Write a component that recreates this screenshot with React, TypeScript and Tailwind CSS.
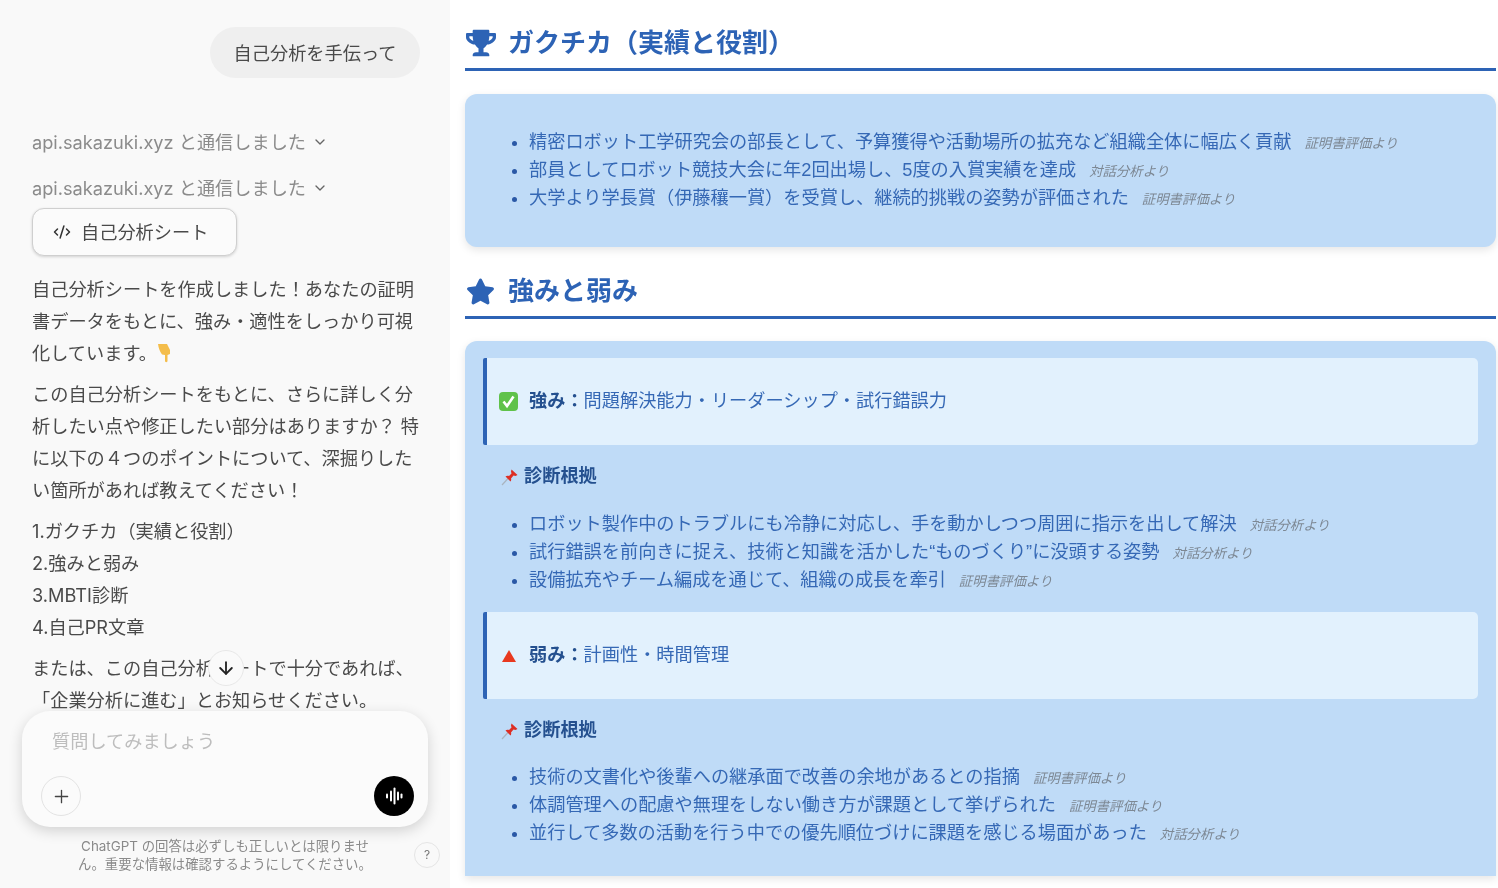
import React from 'react';
import { ArrowDown, ChevronDown, CodeXml, Plus } from 'lucide-react';
import { FaStar, FaTrophy } from 'react-icons/fa';

type Item = { text: string; source: string };

const gakuchika: Item[] = [
  { text: '精密ロボット工学研究会の部長として、予算獲得や活動場所の拡充など組織全体に幅広く貢献', source: '証明書評価より' },
  { text: '部員としてロボット競技大会に年2回出場し、5度の入賞実績を達成', source: '対話分析より' },
  { text: '大学より学長賞（伊藤穰一賞）を受賞し、継続的挑戦の姿勢が評価された', source: '証明書評価より' },
];

const strengths: Item[] = [
  { text: 'ロボット製作中のトラブルにも冷静に対応し、手を動かしつつ周囲に指示を出して解決', source: '対話分析より' },
  { text: '試行錯誤を前向きに捉え、技術と知識を活かした“ものづくり”に没頭する姿勢', source: '対話分析より' },
  { text: '設備拡充やチーム編成を通じて、組織の成長を牽引', source: '証明書評価より' },
];

const weaknesses: Item[] = [
  { text: '技術の文書化や後輩への継承面で改善の余地があるとの指摘', source: '証明書評価より' },
  { text: '体調管理への配慮や無理をしない働き方が課題として挙げられた', source: '証明書評価より' },
  { text: '並行して多数の活動を行う中での優先順位づけに課題を感じる場面があった', source: '対話分析より' },
];

const Pin = () => (
  <svg width="18" height="18" viewBox="0 0 18 18" className="shrink-0">
    <path d="M1 17 L7 10.5" stroke="#a9b4bf" strokeWidth="1.2" />
    <path d="M10.5 1.5 L16.5 7 L14.5 8 L12.5 7.5 L10 10.5 C10.5 12 10 13 9.5 13.5 L4.5 8.5 C5.5 7.5 7 7.5 8 8 L10.5 5.5 L10 3.5 Z" fill="#dd2e24" />
  </svg>
);

const CheckEmoji = () => (
  <svg width="19" height="19" viewBox="0 0 19 19" className="shrink-0">
    <rect x="0" y="0" width="19" height="19" rx="4" fill="#5fc24a" />
    <path d="M4.5 9.5 L8 14 L14.5 4.5" fill="none" stroke="#fff" strokeWidth="2.6" />
  </svg>
);

const PointDown = () => (
  <svg width="16" height="20" viewBox="0 0 16 20" className="inline-block align-[-3px]">
    <path d="M1 1 H10 C11 3 12 5 13 7 V11 L10.5 12 V18 C10.5 19.5 8 19.5 8 18 V12 L5 11.5 C3 9 1.5 5 1 1 Z" fill="#f4bd4a" />
  </svg>
);

const Wave = () => (
  <svg width="20" height="20" viewBox="0 0 20 20">
    <g stroke="#fff" strokeWidth="2" strokeLinecap="round">
      <path d="M3 8.5 V11.5" />
      <path d="M7 5.5 V14.5" />
      <path d="M10.5 2.5 V17.5" />
      <path d="M14 6.5 V13.5" />
      <path d="M17.5 8.5 V11.5" />
    </g>
  </svg>
);

const Bullets = ({ items, className }: { items: Item[]; className: string }) => (
  <ul className={`list-disc pl-[64px] marker:text-[#2a58a6] ${className}`}>
    {items.map((item) => (
      <li key={item.text} className="h-[28px] leading-[28px] whitespace-nowrap">
        {item.text}
        <span className="ml-[13px] text-[13.4px] italic text-[#7d8894]">{item.source}</span>
      </li>
    ))}
  </ul>
);

const Heading = ({ icon, title, className }: { icon: React.ReactNode; title: string; className: string }) => (
  <div className={`flex h-[52px] items-start border-b-[3px] border-[#2d63b5] text-[#2d63b5] ${className}`}>
    <div className="flex h-[48px] w-[43px] shrink-0 items-center pl-[1px]">{icon}</div>
    <h2 className="text-[26px] font-bold leading-[48px]">{title}</h2>
  </div>
);

const Callout = ({ icon, label, text, className }: { icon: React.ReactNode; label: string; text: string; className: string }) => (
  <div className={`flex h-[87px] items-center rounded-r-[5px] rounded-l-[2px] border-l-4 border-[#2d63b5] bg-[#e2f1fd] ${className}`}>
    <div className="flex w-[42px] shrink-0 justify-center pl-[1px]">{icon}</div>
    <span className="font-bold text-[#24508f]">{label}：</span>
    <span>{text}</span>
  </div>
);

const Evidence = ({ className }: { className: string }) => (
  <div className={`ml-[18px] flex h-[28px] items-center gap-[5px] font-bold text-[#24508f] ${className}`}>
    <Pin />
    <span>診断根拠</span>
  </div>
);

export default function App() {
  return (
    <div className="flex h-[888px] w-[1498px] overflow-hidden bg-white font-['Inter','Noto_Sans_CJK_JP',sans-serif] text-[18.2px] blur-[0.4px]">
      <aside className="relative flex w-[450px] shrink-0 flex-col bg-[#f9f9f9] px-[32px] pt-[27px] leading-[32px] text-[#4a4a4a]">
        <div className="mr-[-2px] flex h-[51px] w-[210px] items-center justify-center self-end rounded-full bg-[#efefef]">
          自己分析を手伝って
        </div>

        <div className="mt-[48px] flex items-center gap-[6px] whitespace-nowrap text-[#8b8b8b]">
          api.sakazuki.xyz と通信しました
          <ChevronDown size={16} strokeWidth={2} className="text-[#666]" />
        </div>
        <div className="mt-[14px] flex items-center gap-[6px] whitespace-nowrap text-[#8b8b8b]">
          api.sakazuki.xyz と通信しました
          <ChevronDown size={16} strokeWidth={2} className="text-[#666]" />
        </div>

        <div className="mt-[4px] flex h-[48px] w-[205px] items-center gap-[10px] rounded-[12px] border border-[#cfcfcf] bg-[#fbfbfb] pl-[20px] shadow-[0_1px_3px_rgba(0,0,0,0.16)]">
          <CodeXml size={18} strokeWidth={2} className="text-[#333]" />
          <span>自己分析シート</span>
        </div>

        <p className="mt-[17px] whitespace-nowrap">
          自己分析シートを作成しました！あなたの証明
          <br />
          書データをもとに、強み・適性をしっかり可視
          <br />
          化しています。
          <PointDown />
        </p>
        <p className="mt-[9px] whitespace-nowrap">
          この自己分析シートをもとに、さらに詳しく分
          <br />
          析したい点や修正したい部分はありますか？ 特
          <br />
          に以下の４つのポイントについて、深掘りした
          <br />
          い箇所があれば教えてください！
        </p>
        <ol className="mt-[9px]">
          <li>1.ガクチカ（実績と役割）</li>
          <li>2.強みと弱み</li>
          <li>3.MBTI診断</li>
          <li>4.自己PR文章</li>
        </ol>
        <p className="mt-[9px] whitespace-nowrap">
          または、この自己分析シートで十分であれば、
          <br />
          「企業分析に進む」とお知らせください。
        </p>

        <button className="absolute left-[208px] top-[650px] flex h-[36px] w-[36px] items-center justify-center rounded-full border border-[#e8e8e8] bg-[#fafafa]">
          <ArrowDown size={20} strokeWidth={2.2} className="text-[#222]" />
        </button>

        <div className="relative z-10 mx-[-10px] mt-[-5px] flex h-[116px] shrink-0 flex-col rounded-[28px] bg-[#fbfbfb] pl-[20px] pr-[14px] shadow-[0_4px_14px_rgba(0,0,0,0.16)]">
          <div className="mt-[14px] pl-[10px] text-[#bdbdbd]">質問してみましょう</div>
          <div className="mt-[19px] flex items-center justify-between pr-0">
            <div className="ml-[-1px] flex h-[40px] w-[40px] items-center justify-center rounded-full border border-[#e3e3e3]">
              <Plus size={21} strokeWidth={1.5} className="text-[#444]" />
            </div>
            <div className="flex h-[40px] w-[40px] items-center justify-center rounded-full bg-black">
              <Wave />
            </div>
          </div>
        </div>

        <div className="mt-[10px] text-center text-[13.4px] leading-[18px] text-[#8a8a8a] whitespace-nowrap">
          ChatGPT の回答は必ずしも正しいとは限りませ
          <br />
          ん。重要な情報は確認するようにしてください。
        </div>
        <div className="absolute left-[414px] top-[842px] flex h-[26px] w-[26px] items-center justify-center rounded-full border border-[#e5e5e5] text-[12px] leading-none text-[#777]">
          ?
        </div>
      </aside>

      <main className="flex min-w-0 flex-1 flex-col pl-[15px] pr-[2px] pt-[19px] font-['Liberation_Sans','Noto_Sans_CJK_JP',sans-serif] text-[#3568b5]">
        <Heading icon={<FaTrophy size={30} />} title="ガクチカ（実績と役割）" className="" />
        <section className="mt-[23px] h-[153px] shrink-0 rounded-[12px] bg-[#bfdbf7] pt-[34px] shadow-[0_3px_8px_rgba(0,0,0,0.1)]">
          <Bullets items={gakuchika} className="" />
        </section>

        <Heading icon={<FaStar size={29} />} title="強みと弱み" className="mt-[20px]" />
        <section className="mt-[22px] h-[535px] shrink-0 rounded-t-[12px] bg-[#bfdbf7] px-[18px] pt-[17px] shadow-[0_3px_8px_rgba(0,0,0,0.1)]">
          <Callout icon={<CheckEmoji />} label="強み" text="問題解決能力・リーダーシップ・試行錯誤力" className="" />
          <Evidence className="mt-[18px] ml-0" />
          <Bullets items={strengths} className="mx-[-18px] mt-[19px]" />
          <Callout
            icon={
              <svg width="14" height="12" viewBox="0 0 14 12">
                <path d="M7 0 L14 12 H0 Z" fill="#e8391f" />
              </svg>
            }
            label="弱み"
            text="計画性・時間管理"
            className="mt-[18px]"
          />
          <Evidence className="mt-[18px] ml-0" />
          <Bullets items={weaknesses} className="mx-[-18px] mt-[18px]" />
        </section>
      </main>
    </div>
  );
}
